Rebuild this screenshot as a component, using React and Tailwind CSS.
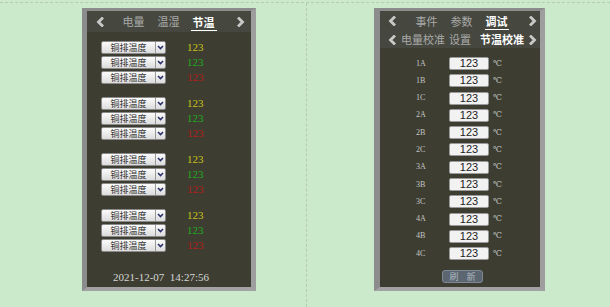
import React from "react";

const CJK = { fontFamily: '"Noto Sans CJK SC", "Noto Sans", sans-serif' };
const SERIF = { fontFamily: '"Liberation Serif", "DejaVu Serif", serif' };
const SANS = { fontFamily: '"Liberation Sans", Arial, sans-serif' };

function Chev({ dir = "left" }) {
  return (
    <svg width="8" height="10" viewBox="0 0 8 10" className="block">
      {dir === "left" ? (
        <polyline points="6,1.5 2.5,5 6,8.5" fill="none" stroke="#c9c9c9" strokeWidth="2.8" strokeLinecap="square" />
      ) : (
        <polyline points="2,1.5 5.5,5 2,8.5" fill="none" stroke="#c9c9c9" strokeWidth="2.8" strokeLinecap="square" />
      )}
    </svg>
  );
}

function Select() {
  return (
    <div className="flex h-[13px] w-[65px] rounded-[2px] border border-[#8a8a8a] bg-gradient-to-b from-[#fbfbfb] to-[#dcdcdc]">
      <div className="flex flex-1 items-center justify-center text-[9px] leading-none text-[#333]" style={CJK}>
        铜排温度
      </div>
      <div className="flex w-[10px] items-center justify-center border-l border-[#9a9a9a]">
        <svg width="7" height="5" viewBox="0 0 7 5">
          <polyline points="1,1 3.5,3.5 6,1" fill="none" stroke="#2a2e6a" strokeWidth="1.6" />
        </svg>
      </div>
    </div>
  );
}

const vals = ["#c9c21c", "#1fae1f", "#b81a1a"];

function Group({ first }) {
  return (
    <div className={`flex flex-col gap-[2px] ${first ? "" : "mt-[13px]"}`}>
      {vals.map((c, i) => (
        <div key={i} className="flex h-[13px] items-center">
          <Select />
          <span className="ml-[21px] text-[11px] leading-none" style={{ ...SERIF, color: c }}>
            123
          </span>
        </div>
      ))}
    </div>
  );
}

function LeftPanel() {
  return (
    <div className="ml-[82px] mt-[5px] h-[283px] w-[174px] border-b-[4px] border-l-[5px] border-r-[5px] border-t-[3px] border-b-[#a2a2a2] border-l-[#8c8c8c] border-r-[#9e9e9e] border-t-[#8c8c8c] bg-[#3d3e31]">
      <div className="flex h-[21px] items-center bg-[#46483f]" style={CJK}>
        <div className="w-[29px] pl-[9px]">
          <Chev dir="left" />
        </div>
        <div className="w-[35px] text-center text-[11px] leading-none text-[#a9a9a9]">电量</div>
        <div className="w-[35px] text-center text-[11px] leading-none text-[#a9a9a9]">温湿</div>
        <div className="flex w-[35px] justify-center">
          <span className="mt-[4px] border-b border-white px-[2px] pb-[2px] text-[11px] font-bold leading-none text-white">节温</span>
        </div>
        <div className="pl-[16px]">
          <Chev dir="right" />
        </div>
      </div>
      <div className="flex flex-col pl-[14px] pt-[9px]">
        <Group first />
        <Group />
        <Group />
        <Group />
      </div>
      <div className="mt-[19px] pl-[26px] text-[11px] leading-[13px] text-[#d6d6d6]" style={SERIF}>
        2021-12-07&nbsp;&nbsp;14:27:56
      </div>
    </div>
  );
}

const labels = ["1A", "1B", "1C", "2A", "2B", "2C", "3A", "3B", "3C", "4A", "4B", "4C"];

function RightPanel() {
  return (
    <div className="ml-[67px] mt-[5px] h-[283px] w-[171px] border-b-[4px] border-l-[6px] border-r-[5px] border-t-[3px] border-b-[#a2a2a2] border-l-[#8c8c8c] border-r-[#9e9e9e] border-t-[#8c8c8c] bg-[#3d3e31]">
      <div className="flex h-[37px] flex-col bg-[#46483f]" style={CJK}>
        <div className="flex h-[20px] items-center">
          <div className="pl-[8px]">
            <Chev dir="left" />
          </div>
          <div className="ml-[13px] w-[35px] text-center text-[11px] leading-none text-[#a9a9a9]">事件</div>
          <div className="w-[35px] text-center text-[11px] leading-none text-[#a9a9a9]">参数</div>
          <div className="flex w-[35px] justify-center">
            <span className="mt-[4px] border-b border-white px-[1px] pb-[2px] text-[11px] font-bold leading-none text-white">调试</span>
          </div>
          <div className="ml-[15px]">
            <Chev dir="right" />
          </div>
        </div>
        <div className="flex h-[17px] items-center text-[11px] leading-none">
          <div className="pl-[8px]">
            <Chev dir="left" />
          </div>
          <span className="ml-[5px] text-[#a9a9a9]">电量校准</span>
          <span className="ml-[4px] text-[#a9a9a9]">设置</span>
          <span className="ml-[9px] font-bold text-white">节温校准</span>
          <div className="ml-[5px]">
            <Chev dir="right" />
          </div>
        </div>
      </div>
      <div className="flex flex-col gap-[4.3px] pt-[9px]">
        {labels.map((l) => (
          <div key={l} className="flex h-[13px] items-center">
            <div className="w-[69px] pl-[36px] text-[8px] leading-none text-[#c4c4c4]" style={SERIF}>
              {l}
            </div>
            <div className="flex h-[13px] w-[40px] items-center justify-center rounded-[2px] border border-[#9a9a9a] bg-[#f2f2f2] text-[11px] leading-none text-[#222]" style={SANS}>
              123
            </div>
            <span className="ml-[4px] text-[8px] leading-none text-[#d0d0d0]" style={SERIF}>
              ℃
            </span>
          </div>
        ))}
      </div>
      <div className="ml-[62px] mt-[10px] flex h-[13px] w-[41px] items-center justify-center gap-[8px] rounded-[3px] border border-[#7d8a96] bg-[#5b6670] text-[9px] leading-none text-[#aeb8c2]" style={CJK}>
        <span>刷</span>
        <span>新</span>
      </div>
    </div>
  );
}

export default function App() {
  return (
    <div className="h-[307px] w-[610px] overflow-hidden bg-[#cbe9cb] pt-[2px]">
      <div className="flex h-[305px] border-t border-dashed border-[#b9c9b9]">
        <div className="h-full w-[307px] border-r border-dashed border-[#b9c9b9]">
          <LeftPanel />
        </div>
        <div className="h-full flex-1">
          <RightPanel />
        </div>
      </div>
    </div>
  );
}
